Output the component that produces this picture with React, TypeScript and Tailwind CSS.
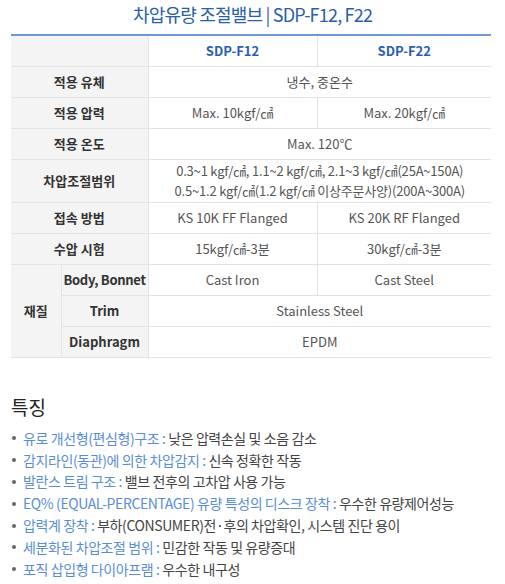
const font = { fontFamily: '"Noto Sans CJK KR", "Noto Sans", sans-serif' };

const features = [
  ["유로 개선형(편심형)구조", "낮은 압력손실 및 소음 감소"],
  ["감지라인(동관)에 의한 차압감지", "신속 정확한 작동"],
  ["발란스 트림 구조", "밸브 전후의 고차압 사용 가능"],
  ["EQ% (EQUAL-PERCENTAGE) 유량 특성의 디스크 장착", "우수한 유량제어성능"],
  ["압력계 장착", "부하(CONSUMER)전·후의 차압확인, 시스템 진단 용이"],
  ["세분화된 차압조절 범위", "민감한 작동 및 유량증대"],
  ["포직 삽입형 다이아프램", "우수한 내구성"],
];

const label = "bg-[#f4f4f4] text-[#333] font-semibold text-[13px] text-center border-b border-r border-[#e3e3e3]";
const cell = "text-[#555] text-[13px] text-center border-b border-[#e3e3e3]";
const head = "text-[#2a5db0] font-semibold text-[13px] text-center border-b border-[#e3e3e3]";

export default function App() {
  return (
    <div className="w-[505px] h-[584px] bg-white px-[11px] overflow-hidden" style={font}>
      <h1 className="h-[34px] pt-[1px] text-center text-[18px] leading-[26px] text-[#2b5ea8] tracking-[-0.8px]">
        차압유량 조절밸브 | SDP-F12, F22
      </h1>

      <table className="w-[480px] table-fixed border-collapse border-t-2 border-[#6b9bd0]">
        <colgroup>
          <col className="w-[50px]" />
          <col className="w-[87px]" />
          <col className="w-[169px]" />
          <col className="w-[174px]" />
        </colgroup>
        <tbody>
          <tr className="h-[31px]">
            <td colSpan={2} className={label}></td>
            <td className={head + " border-r"}>SDP-F12</td>
            <td className={head}>SDP-F22</td>
          </tr>
          <tr className="h-[31px]">
            <td colSpan={2} className={label}>적용 유체</td>
            <td colSpan={2} className={cell}>냉수, 중온수</td>
          </tr>
          <tr className="h-[31px]">
            <td colSpan={2} className={label}>적용 압력</td>
            <td className={cell + " border-r"}>Max. 10kgf/㎠</td>
            <td className={cell}>Max. 20kgf/㎠</td>
          </tr>
          <tr className="h-[31px]">
            <td colSpan={2} className={label}>적용 온도</td>
            <td colSpan={2} className={cell}>Max. 120℃</td>
          </tr>
          <tr className="h-[43px]">
            <td colSpan={2} className={label}>차압조절범위</td>
            <td colSpan={2} className={cell + " leading-[20px] tracking-[-0.2px]"}>
              0.3~1 kgf/㎠, 1.1~2 kgf/㎠, 2.1~3 kgf/㎠(25A~150A)
              <br />
              0.5~1.2 kgf/㎠(1.2 kgf/㎠ 이상주문사양)(200A~300A)
            </td>
          </tr>
          <tr className="h-[31px]">
            <td colSpan={2} className={label}>접속 방법</td>
            <td className={cell + " border-r"}>KS 10K FF Flanged</td>
            <td className={cell}>KS 20K RF Flanged</td>
          </tr>
          <tr className="h-[31px]">
            <td colSpan={2} className={label}>수압 시험</td>
            <td className={cell + " border-r"}>15kgf/㎠-3분</td>
            <td className={cell}>30kgf/㎠-3분</td>
          </tr>
          <tr className="h-[31px]">
            <td rowSpan={3} className={label}>재질</td>
            <td className={label + " tracking-[-0.3px]"}>Body, Bonnet</td>
            <td className={cell + " border-r"}>Cast Iron</td>
            <td className={cell}>Cast Steel</td>
          </tr>
          <tr className="h-[31px]">
            <td className={label}>Trim</td>
            <td colSpan={2} className={cell}>Stainless Steel</td>
          </tr>
          <tr className="h-[31px]">
            <td className={label}>Diaphragm</td>
            <td colSpan={2} className={cell}>EPDM</td>
          </tr>
        </tbody>
      </table>

      <h2 className="mt-[36px] text-[19px] leading-[26px] text-[#222]">특징</h2>
      <ul className="mt-[8px] flex flex-col">
        {features.map(([a, b]) => (
          <li key={a} className="flex items-center gap-[7px] h-[21.8px] text-[14px] tracking-[-0.4px]">
            <span className="w-[4px] h-[4px] rounded-full bg-[#666] shrink-0 ml-[1px]" />
            <span>
              <span className="text-[#5b8dd6]">{a} :</span>
              <span className="text-[#444]"> {b}</span>
            </span>
          </li>
        ))}
      </ul>
    </div>
  );
}
